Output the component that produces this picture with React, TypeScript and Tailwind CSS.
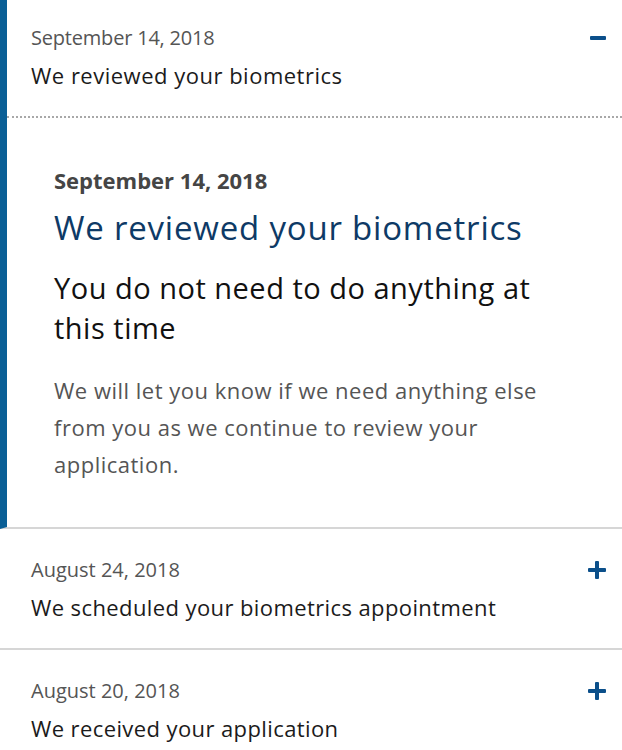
import React from "react";

const font = { fontFamily: "'Open Sans', sans-serif" };

function Minus() {
  return <div className="w-[16px] h-[4px] bg-[#0b4f8a] rounded-[1px]" />;
}

function Plus() {
  return (
    <svg width="18" height="18" viewBox="0 0 18 18">
      <rect x="7" y="0" width="4" height="18" rx="1" fill="#0b4f8a" />
      <rect x="0" y="7" width="18" height="4" rx="1" fill="#0b4f8a" />
    </svg>
  );
}

function Collapsed({ date, title }: { date: string; title: string }) {
  return (
    <div className="border-b-2 border-[#d6d6d6] pl-[31px] pr-[16px] pt-[27px] pb-[26px]">
      <div className="flex items-center justify-between">
        <div className="text-[20px] leading-[28px] text-[#555555]">{date}</div>
        <Plus />
      </div>
      <div className="mt-[8px] text-[22px] leading-[30px] tracking-[0.4px] text-[#1b1b1b]">{title}</div>
    </div>
  );
}

export default function App() {
  return (
    <div className="w-[622px] h-[750px] overflow-hidden bg-white" style={font}>
      <div className="border-l-[7px] border-[#0a5f96] border-b-2 border-b-[#d6d6d6]">
        <div className="pl-[24px] pr-[16px] pt-[24px] pb-[26px] border-b-2 border-dotted border-b-[#a8a8a8]">
          <div className="flex items-center justify-between">
            <div className="text-[20px] leading-[28px] tracking-[-0.2px] text-[#555555]">September 14, 2018</div>
            <Minus />
          </div>
          <div className="mt-[8px] text-[22px] leading-[30px] tracking-[0.5px] text-[#1b1b1b]">We reviewed your biometrics</div>
        </div>
        <div className="pl-[47px] pr-[20px] pt-[47px] pb-[44px]">
          <div className="text-[22px] leading-[30px] font-bold text-[#454545]">September 14, 2018</div>
          <div className="mt-[11px] text-[33px] leading-[44px] tracking-[0.8px] text-[#0e3a66]">We reviewed your biometrics</div>
          <div className="mt-[18px] max-w-[500px] text-[29px] leading-[40px] tracking-[0.5px] text-[#111111]">
            You do not need to do anything at this time
          </div>
          <div className="mt-[24px] max-w-[500px] text-[22px] leading-[37px] tracking-[0.5px] text-[#555555]">
            We will let you know if we need anything else from you as we continue to review your application.
          </div>
        </div>
      </div>
      <Collapsed date="August 24, 2018" title="We scheduled your biometrics appointment" />
      <Collapsed date="August 20, 2018" title="We received your application" />
    </div>
  );
}
